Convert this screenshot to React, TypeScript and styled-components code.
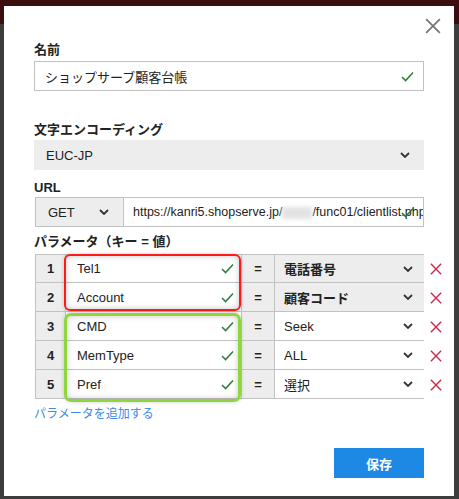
import React from 'react';
import styled, { createGlobalStyle } from 'styled-components';

const GlobalStyle = createGlobalStyle`
  html, body {
    margin: 0;
    padding: 0;
  }
  body {
    width: 459px;
    height: 499px;
    overflow: hidden;
    background: linear-gradient(#3a0d0f 0, #3a0d0f 24px, #3d3d3d 24px);
    font-family: "Liberation Sans", "Noto Sans CJK JP", sans-serif;
    color: #222;
  }
`;

const Page = styled.div`
  padding: 6px 5px 3px 4px;
`;

const Modal = styled.div`
  position: relative;
  width: 450px;
  height: 490px;
  box-sizing: border-box;
  background: #fff;
  padding: 36px 30px 0 30px;
`;

const CloseButton = styled.button`
  position: absolute;
  top: 12px;
  right: 13px;
  width: 17px;
  height: 17px;
  padding: 0;
  border: none;
  background: none;
  cursor: pointer;
`;

const Field = styled.div<{ gap: number }>`
  margin-bottom: ${p => p.gap}px;
`;

const Label = styled.div<{ space: number }>`
  font-size: 13px;
  font-weight: bold;
  line-height: 16px;
  margin-bottom: ${p => p.space}px;
`;

const TextBox = styled.div`
  display: flex;
  align-items: center;
  height: 30px;
  box-sizing: border-box;
  border: 1px solid #c2c2c2;
  padding: 0 9px 0 10px;
  font-size: 13px;
`;

const TextValue = styled.span`
  flex: 1;
  white-space: nowrap;
  overflow: hidden;
`;

const SelectBox = styled.div<{ width?: number; bordered?: boolean }>`
  display: flex;
  align-items: center;
  height: 30px;
  box-sizing: border-box;
  width: ${p => (p.width ? `${p.width}px` : 'auto')};
  flex: ${p => (p.width ? 'none' : '1')};
  background: #ededed;
  border: ${p => (p.bordered ? '1px solid #c2c2c2' : 'none')};
  padding: 0 14px 0 12px;
  font-size: 13px;
`;

const SelectText = styled.span`
  flex: 1;
`;

const UrlRow = styled.div`
  display: flex;
  margin-left: 1px;
`;

const UrlInput = styled.div`
  flex: 1;
  position: relative;
  display: flex;
  align-items: center;
  height: 30px;
  box-sizing: border-box;
  border: 1px solid #c2c2c2;
  border-left: none;
  padding: 0 0 0 9px;
  font-size: 12.5px;
  overflow: hidden;
`;

const UrlText = styled.span`
  white-space: nowrap;
`;

const Blur = styled.span`
  display: inline-block;
  width: 30px;
  height: 12px;
  vertical-align: middle;
  background: #e2e2e2;
  filter: blur(2px);
`;

const UrlCheck = styled.span`
  position: absolute;
  right: 9px;
  top: 9px;
  display: flex;
`;

const TableWrap = styled.div`
  position: relative;
  margin-left: 1px;
`;

const ParamRow = styled.div`
  display: flex;
  align-items: center;
`;

const Cells = styled.div<{ first?: boolean }>`
  display: grid;
  grid-template-columns: 30px 176px 33px 149px;
  width: 389px;
  height: 29px;
  box-sizing: border-box;
  border: 1px solid #c2c2c2;
  border-top: ${p => (p.first ? '1px solid #c2c2c2' : 'none')};
`;

const NumCell = styled.div`
  display: flex;
  align-items: center;
  justify-content: center;
  background: #ededed;
  border-right: 1px solid #c2c2c2;
  font-size: 13px;
  font-weight: bold;
`;

const KeyCell = styled.div`
  display: flex;
  align-items: center;
  padding: 0 7px 0 11px;
  border-right: 1px solid #c2c2c2;
  font-size: 13px;
`;

const EqCell = styled.div`
  display: flex;
  align-items: center;
  justify-content: center;
  background: #ededed;
  border-right: 1px solid #c2c2c2;
  font-size: 13px;
  font-weight: bold;
`;

const ValueCell = styled.div<{ fixed: boolean }>`
  display: flex;
  align-items: center;
  padding: 0 11px 0 9px;
  background: ${p => (p.fixed ? '#ededed' : '#fff')};
  font-size: 13px;
  font-weight: ${p => (p.fixed ? 'bold' : 'normal')};
`;

const DeleteButton = styled.button`
  display: flex;
  margin-left: 6px;
  padding: 0;
  border: none;
  background: none;
  cursor: pointer;
`;

const Highlight = styled.div<{ top: number; height: number; color: string; thick: number; radius: number }>`
  position: absolute;
  left: 29px;
  top: ${p => p.top}px;
  width: 177px;
  height: ${p => p.height}px;
  box-sizing: border-box;
  border: ${p => p.thick}px solid ${p => p.color};
  border-radius: ${p => p.radius}px;
  box-shadow: inset 0 0 6px rgba(0, 0, 0, 0.22), 0 0 4px rgba(0, 0, 0, 0.18);
  pointer-events: none;
`;

const AddLink = styled.a`
  display: inline-block;
  margin-top: 7px;
  font-size: 12px;
  line-height: 16px;
  color: #3b8ae6;
  text-decoration: none;
  cursor: pointer;
`;

const Footer = styled.div`
  display: flex;
  justify-content: flex-end;
  margin-top: 26px;
`;

const SaveButton = styled.button`
  width: 90px;
  height: 30px;
  border: none;
  background: #1e88e5;
  color: #fff;
  font-family: "Liberation Sans", "Noto Sans CJK JP", sans-serif;
  font-size: 13px;
  font-weight: bold;
  cursor: pointer;
`;

const Check = () => (
  <svg width="13" height="11" viewBox="0 0 13 11">
    <path d="M1 6 L4.6 9.6 L12 1.5" fill="none" stroke="#2f7d3c" strokeWidth="1.5" />
  </svg>
);

const Chevron = () => (
  <svg width="10" height="6" viewBox="0 0 10 6">
    <path d="M1 1 L5 5 L9 1" fill="none" stroke="#333" strokeWidth="1.8" />
  </svg>
);

const Cross = ({ size, color, width }: { size: number; color: string; width: number }) => (
  <svg width={size} height={size} viewBox="0 0 14 14">
    <path d="M1 1 L13 13 M13 1 L1 13" fill="none" stroke={color} strokeWidth={width} />
  </svg>
);

const params = [
  { key: 'Tel1', value: '電話番号', fixed: true },
  { key: 'Account', value: '顧客コード', fixed: true },
  { key: 'CMD', value: 'Seek', fixed: false },
  { key: 'MemType', value: 'ALL', fixed: false },
  { key: 'Pref', value: '選択', fixed: false },
];

export default function App() {
  return (
    <Page>
      <GlobalStyle />
      <Modal>
        <CloseButton>
          <Cross size={16} color="#777" width={1.6} />
        </CloseButton>

        <Field gap={31}>
          <Label space={3}>名前</Label>
          <TextBox>
            <TextValue>ショップサーブ顧客台帳</TextValue>
            <Check />
          </TextBox>
        </Field>

        <Field gap={10}>
          <Label space={2}>文字エンコーディング</Label>
          <SelectBox>
            <SelectText>EUC-JP</SelectText>
            <Chevron />
          </SelectBox>
        </Field>

        <Field gap={7}>
          <Label space={1}>URL</Label>
          <UrlRow>
            <SelectBox width={89} bordered>
              <SelectText>GET</SelectText>
              <Chevron />
            </SelectBox>
            <UrlInput>
              <UrlText>
                https://kanri5.shopserve.jp/<Blur />/func01/clientlist.php
              </UrlText>
              <UrlCheck>
                <Check />
              </UrlCheck>
            </UrlInput>
          </UrlRow>
        </Field>

        <Field gap={0}>
          <Label space={4}>パラメータ（キー = 値）</Label>
          <TableWrap>
            {params.map((p, i) => (
              <ParamRow key={p.key}>
                <Cells first={i === 0}>
                  <NumCell>{i + 1}</NumCell>
                  <KeyCell>
                    <TextValue>{p.key}</TextValue>
                    <Check />
                  </KeyCell>
                  <EqCell>=</EqCell>
                  <ValueCell fixed={p.fixed}>
                    <SelectText>{p.value}</SelectText>
                    <Chevron />
                  </ValueCell>
                </Cells>
                <DeleteButton>
                  <Cross size={12} color="#d1264b" width={1.6} />
                </DeleteButton>
              </ParamRow>
            ))}
            <Highlight top={0} height={57} color="#ff1a1a" thick={2} radius={6} />
            <Highlight top={59} height={89} color="#8fd53d" thick={3} radius={7} />
          </TableWrap>
          <AddLink>パラメータを追加する</AddLink>
        </Field>

        <Footer>
          <SaveButton>保存</SaveButton>
        </Footer>
      </Modal>
    </Page>
  );
}
